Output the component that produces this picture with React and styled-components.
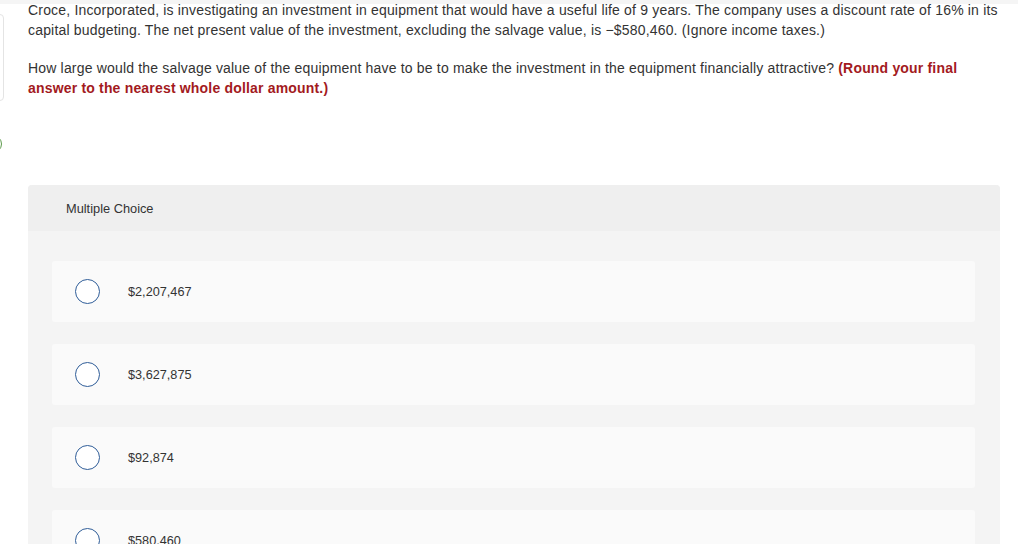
import React from 'react';
import styled, { createGlobalStyle } from 'styled-components';

const GlobalStyle = createGlobalStyle`
  html, body {
    margin: 0;
    padding: 0;
    background: #ffffff;
  }
  body {
    font-family: "Liberation Sans", Arial, sans-serif;
    color: #333333;
  }
`;

const Page = styled.div`
  position: relative;
  width: 1024px;
  height: 544px;
  overflow: hidden;
  background: #ffffff;
`;

const TopStrip = styled.div`
  position: absolute;
  top: 0;
  left: 0;
  right: 6px;
  height: 4px;
  background: #f5f5f5;
`;

const Body = styled.div`
  display: flex;
`;

const Sidebar = styled.div`
  width: 28px;
  flex-shrink: 0;
  overflow: hidden;
`;

const SideBox = styled.div`
  margin: 14px 0 0 -20px;
  width: 22px;
  height: 85px;
  border: 1px solid #e4e4e4;
  border-radius: 4px;
`;

const SideDot = styled.div`
  margin: 34px 0 0 -16px;
  width: 16px;
  height: 16px;
  border: 1.5px solid #5d9a4c;
  border-radius: 50%;
`;

const Content = styled.div`
  width: 974px;
`;

const Paragraph = styled.p`
  margin: ${({ $first }) => ($first ? '0' : '18px')} 0 0;
  font-size: 14px;
  line-height: 20px;
  letter-spacing: 0.18px;
`;

const Hint = styled.span`
  color: #a31a1e;
  font-weight: 700;
`;

const Card = styled.div`
  width: 972px;
  margin-top: 87px;
  border-radius: 4px;
  background: #f4f4f4;
  overflow: hidden;
`;

const CardHeader = styled.div`
  height: 46px;
  display: flex;
  align-items: center;
  padding-left: 38px;
  background: #efefef;
  font-size: 12.8px;
`;

const Options = styled.div`
  display: flex;
  flex-direction: column;
  gap: 22px;
  padding: 30px 25px 30px 24px;
`;

const Option = styled.label`
  display: flex;
  align-items: center;
  height: 61px;
  padding-left: 23px;
  background: #fafafa;
  border-radius: 3px;
  font-size: 12.7px;
`;

const Radio = styled.span`
  width: 23px;
  height: 23px;
  border: 1.3px solid #2f5d98;
  border-radius: 50%;
  background: #ffffff;
  margin-right: 28px;
  flex-shrink: 0;
`;

const choices = ['$2,207,467', '$3,627,875', '$92,874', '$580,460'];

export default function App() {
  return (
    <Page>
      <GlobalStyle />
      <Body>
        <Sidebar>
          <SideBox />
          <SideDot />
        </Sidebar>
        <Content>
          <Paragraph $first>
            Croce, Incorporated, is investigating an investment in equipment that would have a useful life of 9 years. The
            company uses a discount rate of 16% in its capital budgeting. The net present value of the investment, excluding
            the salvage value, is −$580,460. (Ignore income taxes.)
          </Paragraph>
          <Paragraph>
            How large would the salvage value of the equipment have to be to make the investment in the equipment financially
            attractive? <Hint>(Round your final answer to the nearest whole dollar amount.)</Hint>
          </Paragraph>
          <Card>
            <CardHeader>Multiple Choice</CardHeader>
            <Options>
              {choices.map((c) => (
                <Option key={c}>
                  <Radio />
                  {c}
                </Option>
              ))}
            </Options>
          </Card>
        </Content>
      </Body>
      <TopStrip />
    </Page>
  );
}
